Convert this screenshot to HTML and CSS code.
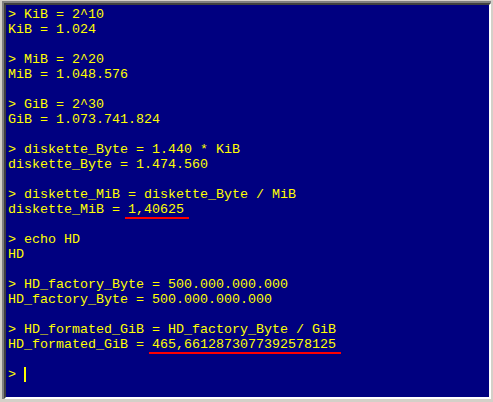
FILE: index.html
```html
<!DOCTYPE html>
<html>
<head>
  <meta charset="utf-8">
  <link rel="stylesheet" href="styles.css">
</head>
<body>
  <div class="frame">
    <div class="console">
<div class="line">&gt; KiB = 2^10</div>
<div class="line">KiB = 1.024</div>
<div class="line"> </div>
<div class="line">&gt; MiB = 2^20</div>
<div class="line">MiB = 1.048.576</div>
<div class="line"> </div>
<div class="line">&gt; GiB = 2^30</div>
<div class="line">GiB = 1.073.741.824</div>
<div class="line"> </div>
<div class="line">&gt; diskette_Byte = 1.440 * KiB</div>
<div class="line">diskette_Byte = 1.474.560</div>
<div class="line"> </div>
<div class="line">&gt; diskette_MiB = diskette_Byte / MiB</div>
<div class="line">diskette_MiB = <span class="mark">1,40625</span></div>
<div class="line"> </div>
<div class="line">&gt; echo HD</div>
<div class="line">HD</div>
<div class="line"> </div>
<div class="line">&gt; HD_factory_Byte = 500.000.000.000</div>
<div class="line">HD_factory_Byte = 500.000.000.000</div>
<div class="line"> </div>
<div class="line">&gt; HD_formated_GiB = HD_factory_Byte / GiB</div>
<div class="line">HD_formated_GiB = <span class="mark">465,6612873077392578125</span></div>
<div class="line"> </div>
<div class="line">&gt; <span class="cursor"></span></div>
    </div>
  </div>
</body>
</html>
```

FILE: styles.css
```css
html, body {
  margin: 0;
}

body {
  width: 493px;
  height: 402px;
  padding: 1px 2px 3px 2px;
  box-sizing: border-box;
  background: #d4d0c8;
  overflow: hidden;
}

.frame {
  height: 100%;
  border-top: 2px solid #808080;
  border-left: 2px solid #808080;
  box-sizing: border-box;
}

.console {
  height: 100%;
  box-sizing: border-box;
  border-top: 2px solid #404040;
  border-left: 2px solid #404040;
  border-right: 2px solid #ffffff;
  border-bottom: 2px solid #ffffff;
  background: #000080;
  color: #ffff00;
  padding: 2px 0 0 2px;
  font-family: "Liberation Mono", monospace;
  font-size: 13.33px;
  line-height: 15px;
}

.line {
  height: 15px;
  white-space: pre;
}

.mark {
  position: relative;
}

/* red hand-drawn style underline */
.mark::after {
  content: "";
  position: absolute;
  left: -3px;
  right: -5px;
  top: 15px;
  height: 2px;
  background: #f00;
}

.cursor {
  display: inline-block;
  width: 2px;
  height: 15px;
  vertical-align: top;
  background: #ffff00;
}
```
